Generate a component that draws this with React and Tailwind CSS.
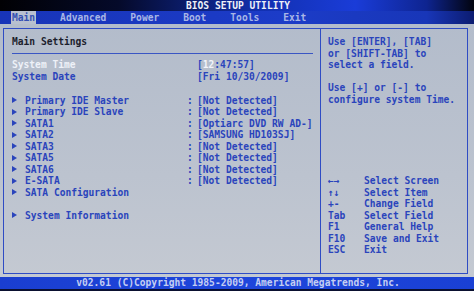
import React from "react";

const mono = { fontFamily: '"DejaVu Sans Mono", "Liberation Mono", monospace' };

function Arrow() {
  return (
    <span className="flex w-[13px] shrink-0 items-center">
      <svg width="5" height="6" viewBox="0 0 5 6">
        <path d="M0 0 L5 3 L0 6 Z" fill="#2a44bc" />
      </svg>
    </span>
  );
}

function Row({ arrow, name, colon, value, nameClass = "text-[#2a44bc]" }) {
  return (
    <div className="flex h-[11.5px] items-center">
      <div className="flex w-[175px] shrink-0 items-center">
        {arrow ? <Arrow /> : null}
        <span className={nameClass}>{name}</span>
      </div>
      <span className="w-[10px] shrink-0 text-[#2a44bc]">{colon ? ":" : ""}</span>
      <span className="whitespace-pre text-[#2a44bc]">{value}</span>
    </div>
  );
}

export default function App() {
  const keys = [
    ["←→", "Select Screen"],
    ["↑↓", "Select Item"],
    ["+-", "Change Field"],
    ["Tab", "Select Field"],
    ["F1", "General Help"],
    ["F10", "Save and Exit"],
    ["ESC", "Exit"],
  ];
  return (
    <div
      className="flex h-[291px] w-[474px] flex-col overflow-hidden bg-[#b9c1ce] text-[9.6px] font-bold leading-[11.5px]"
      style={mono}
    >
      {/* Title bar */}
      <div className="flex h-[11px] items-center justify-center bg-[linear-gradient(90deg,#010104_0%,#050a2a_25%,#1230b0_55%,#1a3cd8_75%,#0e2490_90%,#02040e_100%)]">
        <span className="pl-[2px] text-[#eef0f8]">BIOS SETUP UTILITY</span>
      </div>
      {/* Tabs */}
      <div className="flex h-[13px] items-center gap-[24px] bg-[linear-gradient(90deg,#1834b8_0%,#1c3cc8_60%,#1836b8_90%,#0c1c70_100%)] pl-[11px] text-[#a9b6e6]">
        <span className="bg-[#b8c0d0] px-[1px] leading-[13px] text-[#3450b4]">Main</span>
        <span>Advanced</span>
        <span>Power</span>
        <span>Boot</span>
        <span>Tools</span>
        <span>Exit</span>
      </div>
      {/* Content */}
      <div className="flex flex-1 flex-col bg-[linear-gradient(180deg,#b3bccb_0%,#bcc3cf_60%,#c4c9d2_100%)] px-[3px] pt-[4px]">
        <div className="flex h-[246px] w-[465px] border-[1.5px] border-[#2f4cc4]">
          {/* Left panel */}
          <div className="flex w-[317px] shrink-0 flex-col border-r-[1.5px] border-[#2f4cc4] pl-[8px] pt-[7px]">
            <div className="h-[11.5px] text-[#1c1e2c]">Main Settings</div>
            <div className="mb-[5.5px] mr-[7px] mt-[5px] h-[1px] bg-[#3a56c4]" />
            <Row
              name="System Time"
              nameClass="text-[#eef1f8]"
              value={
                <>
                  [<span className="text-[#f2f4fa]">12</span>:47:57]
                </>
              }
            />
            <Row name="System Date" value="[Fri 10/30/2009]" />
            <div className="h-[12.5px]" />
            <Row arrow name="Primary IDE Master" colon value="[Not Detected]" />
            <Row arrow name="Primary IDE Slave" colon value="[Not Detected]" />
            <Row arrow name="SATA1" colon value="[Optiarc DVD RW AD-]" />
            <Row arrow name="SATA2" colon value="[SAMSUNG HD103SJ]" />
            <Row arrow name="SATA3" colon value="[Not Detected]" />
            <Row arrow name="SATA5" colon value="[Not Detected]" />
            <Row arrow name="SATA6" colon value="[Not Detected]" />
            <Row arrow name="E-SATA" colon value="[Not Detected]" />
            <Row arrow name="SATA Configuration" />
            <div className="h-[11.5px]" />
            <Row arrow name="System Information" />
          </div>
          {/* Right panel */}
          <div className="flex flex-1 flex-col pl-[7px] pt-[7px] text-[#2a44bc]">
            <div className="whitespace-pre">Use [ENTER], [TAB]</div>
            <div className="whitespace-pre">or [SHIFT-TAB] to</div>
            <div className="whitespace-pre">select a field.</div>
            <div className="h-[11.5px]" />
            <div className="whitespace-pre">Use [+] or [-] to</div>
            <div className="whitespace-pre">configure system Time.</div>
            <div className="h-[70px]" />
            {keys.map(([k, d]) => (
              <div key={k} className="flex h-[11.5px] items-center">
                <span className="w-[36px] shrink-0">{k}</span>
                <span>{d}</span>
              </div>
            ))}
          </div>
        </div>
      </div>
      {/* Bottom bar */}
      <div className="flex h-[12px] items-center justify-center bg-[linear-gradient(90deg,#1a3ed0_0%,#1e46dc_50%,#1a40d4_100%)] text-[#c4cef2]">
        <span className="pl-[2px]">v02.61 (C)Copyright 1985-2009, American Megatrends, Inc.</span>
      </div>
      <div className="h-[2px] bg-[#0a1030]" />
    </div>
  );
}
